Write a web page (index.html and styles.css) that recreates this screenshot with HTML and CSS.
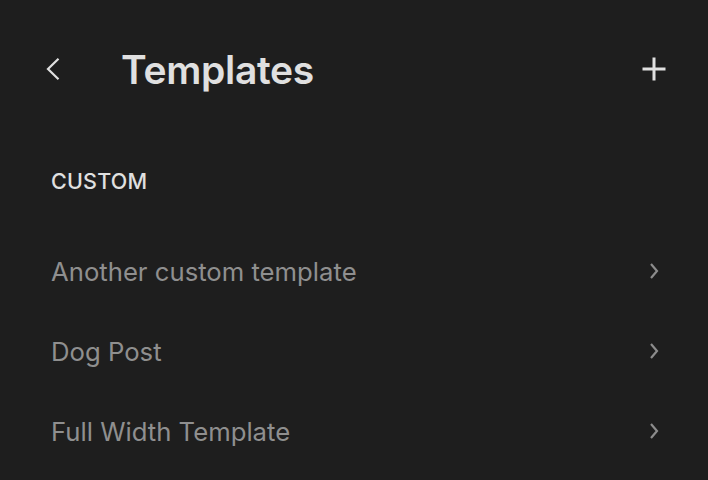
FILE: index.html
```html
<!DOCTYPE html>
<html>
<head>
<meta charset="utf-8">
<link rel="stylesheet" href="styles.css">
</head>
<body>
<div class="panel">
  <header class="header">
    <button class="icon-btn back" aria-label="Back">
      <svg width="24" height="24" viewBox="0 0 24 24"><path d="M16.5 1.8 L6 12 L16.5 22.2" fill="none" stroke="#e0e0e0" stroke-width="2.2"/></svg>
    </button>
    <h1 class="title">Templates</h1>
    <button class="icon-btn add" aria-label="Add">
      <svg width="26" height="26" viewBox="0 0 26 26"><path d="M13 1.5 V24.5 M1.5 13 H24.5" fill="none" stroke="#e0e0e0" stroke-width="3"/></svg>
    </button>
  </header>
  <h2 class="section">CUSTOM</h2>
  <ul class="list">
    <li class="item"><span>Another custom template</span><svg class="chev" width="12" height="18" viewBox="0 0 12 18"><path d="M3 2 L9 9 L3 16" fill="none" stroke="#8c8c8c" stroke-width="2.2"/></svg></li>
    <li class="item"><span>Dog Post</span><svg class="chev" width="12" height="18" viewBox="0 0 12 18"><path d="M3 2 L9 9 L3 16" fill="none" stroke="#8c8c8c" stroke-width="2.2"/></svg></li>
    <li class="item"><span>Full Width Template</span><svg class="chev" width="12" height="18" viewBox="0 0 12 18"><path d="M3 2 L9 9 L3 16" fill="none" stroke="#8c8c8c" stroke-width="2.2"/></svg></li>
  </ul>
</div>
</body>
</html>
```
FILE: styles.css
```css
html, body {
  margin: 0;
  padding: 0;
  background: #1e1e1e;
  font-family: Inter, "Noto Sans", sans-serif;
}
.panel {
  width: 708px;
  height: 480px;
  overflow: hidden;
  box-sizing: border-box;
  padding: 0 40px 0 51px;
}
.header {
  display: flex;
  align-items: center;
  height: 138px;
}
.icon-btn {
  background: none;
  border: 0;
  padding: 0;
  display: flex;
  align-items: center;
  justify-content: center;
}
.back {
  margin-left: -9px;
  width: 24px;
  height: 24px;
}
.title {
  margin: 0 0 0 55px;
  flex: 1;
  color: #e0e0e0;
  font-size: 39px;
  font-weight: 600;
  letter-spacing: -0.3px;
}
.add {
  margin-right: 1px;
}
.section {
  margin: 0;
  padding-top: 30px;
  height: 40px;
  color: #e0e0e0;
  font-size: 21.5px;
  font-weight: 500;
  letter-spacing: 0.2px;
}
.list {
  list-style: none;
  margin: 0;
  padding: 23px 0 0;
}
.item {
  display: flex;
  align-items: center;
  justify-content: space-between;
  height: 80px;
  color: #8f8f8f;
  font-size: 25.7px;
  margin-right: 8px;
}
```
